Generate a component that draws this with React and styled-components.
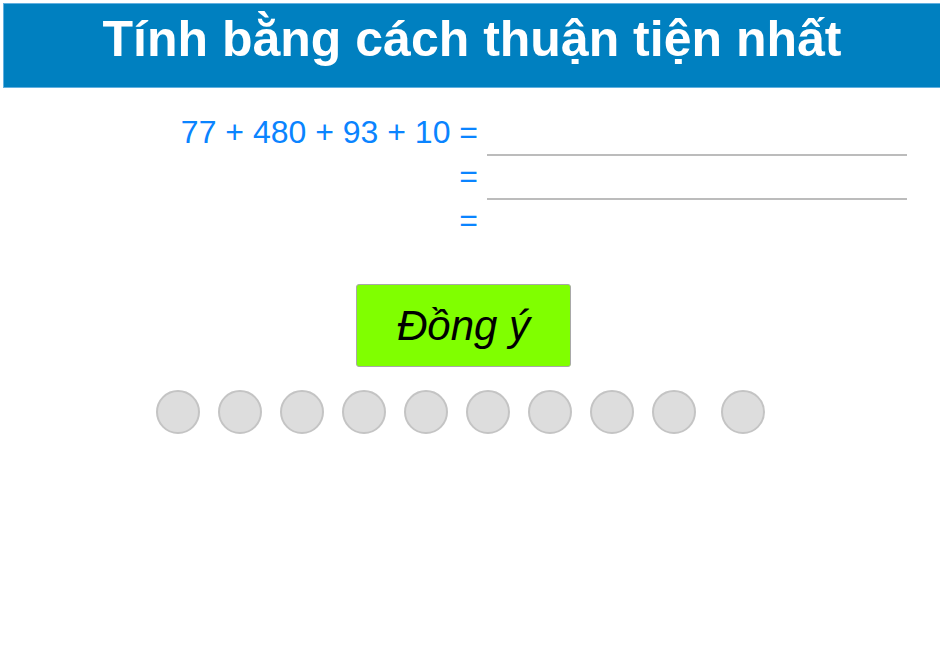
import React from "react";
import styled, { createGlobalStyle } from "styled-components";

const GlobalStyle = createGlobalStyle`
    body {
        margin: 0;
        background: #fff;
        font-family: "Liberation Sans", Arial, sans-serif;
    }
`;

const rows = [
    { label: "77 + 480 + 93 + 10 =", line: true },
    { label: "=", line: true },
    { label: "=", line: false },
];

function App() {
    return (
        <>
            <GlobalStyle />
            <Page>
                <Header>
                    <Title>Tính bằng cách thuận tiện nhất</Title>
                </Header>
                <Equation>
                    {rows.map((r, i) => (
                        <Row key={i}>
                            <Label>{r.label}</Label>
                            <Answer line={r.line ? 1 : 0} />
                        </Row>
                    ))}
                </Equation>
                <Button>Đồng ý</Button>
                <Dots>
                    {Array.from({ length: 10 }).map((_, i) => (
                        <Dot key={i} last={i === 9 ? 1 : 0} />
                    ))}
                </Dots>
            </Page>
        </>
    );
}

export default App;

const Page = styled.div`
    width: 940px;
    height: 672px;
    padding-top: 3px;
    box-sizing: border-box;
`;
const Header = styled.header`
    margin-left: 3px;
    height: 85px;
    box-sizing: border-box;
    background: #0080c0;
    border: 1px solid #62b0e0;
    border-right: none;
    display: flex;
    justify-content: center;
    padding-top: 7px;
`;
const Title = styled.h1`
    margin: 0;
    color: #fff;
    font-size: 50px;
    font-weight: bold;
    line-height: 57px;
`;
const Equation = styled.section`
    margin: 24px 0 0 178px;
    display: flex;
    flex-direction: column;
`;
const Row = styled.div`
    display: grid;
    grid-template-columns: 300px 420px;
    column-gap: 9px;
    height: 44px;
`;
const Label = styled.div`
    text-align: right;
    color: #0a84ff;
    font-size: 32px;
    line-height: 40px;
`;
const Answer = styled.div`
    border-bottom: ${(p) => (p.line ? "2px solid #bcbcbc" : "none")};
    box-sizing: border-box;
`;
const Button = styled.button`
    display: flex;
    align-items: center;
    justify-content: center;
    margin: 40px 0 0 356px;
    width: 215px;
    height: 83px;
    box-sizing: border-box;
    background: #80ff00;
    border: 1px solid #a8a8a8;
    border-radius: 3px;
    font-family: "Liberation Sans", Arial, sans-serif;
    font-style: italic;
    font-size: 42px;
    color: #000;
    padding: 0;
`;
const Dots = styled.div`
    display: flex;
    gap: 18px;
    margin: 23px 0 0 156px;
`;
const Dot = styled.span`
    width: 44px;
    height: 44px;
    box-sizing: border-box;
    border-radius: 50%;
    background: #dddddd;
    border: 2px solid #c4c4c4;
    margin-left: ${(p) => (p.last ? "7px" : "0")};
`;
